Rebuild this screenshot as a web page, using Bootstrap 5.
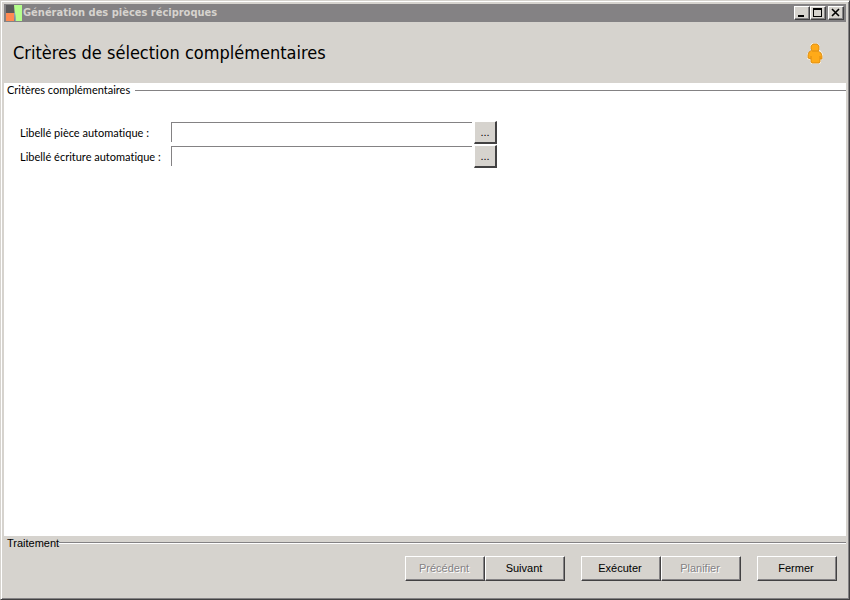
<!DOCTYPE html>
<html lang="fr">
<head>
<meta charset="utf-8">
<meta name="viewport" content="width=device-width, initial-scale=1">
<title>Génération des pièces réciproques</title>
<link href="https://cdn.jsdelivr.net/npm/bootstrap@5.3.0/dist/css/bootstrap.min.css" rel="stylesheet">
<style>
  :root { --face: #d6d3ce; --shade: #848284; --dark: #424142; }
  body { font-family: "Liberation Sans", Arial, sans-serif; font-size: 11px; line-height: 14px; color: #000; background: var(--face); }
  .window {
    padding: 2px; border: 1px solid; border-color: var(--face) var(--dark) var(--dark) var(--face);
    box-shadow: inset 1px 1px #fff, inset -1px -1px var(--shade);
  }
  .window-inner { margin: 1px; }
  .titlebar { height: 18px; background: var(--shade); color: var(--face); padding: 0 2px 0 1px; }
  .titlebar h1 { font: bold 11px/18px "DejaVu Sans Condensed", "DejaVu Sans", sans-serif; }
  .face-btn {
    font-size: 11px; line-height: 14px; color: #000; background: var(--face); padding: 0;
    border: 1px solid; border-color: #fff var(--dark) var(--dark) #fff; border-radius: 0;
    box-shadow: inset -1px -1px var(--shade);
  }
  .caption-btn { width: 16px; height: 14px; }
  .caption-btn svg { display: block; margin: auto; }
  .caption-close { margin-left: 2px; }
  .heading { height: 61px; padding: 1px 22px 0 9px; }
  .heading h2 { font: 18px/24px "DejaVu Sans Condensed", "DejaVu Sans", sans-serif; }
  .criteria { background: #fff; font-family: Lato, "Liberation Sans", sans-serif; font-variant-ligatures: none; }
  .group-title { padding-left: 3px; gap: 5px; }
  .rule { height: 1px; background: var(--shade); }
  .criteria-fields { padding-top: 25px; }
  .criteria-row { height: 24px; }
  .criteria-row label { width: 151px; line-height: 22px; }
  .criteria-input { width: 301px; height: 20px; border: solid var(--shade); border-width: 1px 0 0 1px; padding: 0 3px; outline: 0; }
  .browse-btn { font-family: "Liberation Sans", Arial, sans-serif; width: 23px; height: 23px; margin: -1px 0 0 2px; border-width: 1px 2px 2px 1px; box-shadow: none; }
  .treatment-title { padding-left: 3px; }
  .footer-rule { height: 2px; background: var(--shade); border-bottom: 1px solid #fff; }
  .actions { padding: 6px 9px 15px; }
  .action { width: 80px; height: 25px; padding: 0 2px 1px 0; }
  .action:disabled { color: var(--shade); text-shadow: 1px 1px #fff; }
</style>
</head>
<body>
<div class="window vh-100 d-flex flex-column">
  <div class="window-inner flex-grow-1 d-flex flex-column">
    <header class="titlebar d-flex align-items-center">
      <svg width="18" height="18" viewBox="0 0 18 18" aria-hidden="true">
        <path fill="#5a595a" d="M1 1h8v8H1z"/><path fill="#ff8a52" d="M1 9h8v8H1z"/><path fill="#b5ff8c" d="M9 1h8v16h-6z"/><path stroke="#8ca6bd" d="M9.500 9l1 8"/>
      </svg>
      <h1 class="m-0 flex-grow-1">Génération des pièces réciproques</h1>
      <button type="button" class="face-btn caption-btn" aria-label="Réduire"><svg width="14" height="12"><path fill="#000" d="M3 8h6v2H3z"/></svg></button>
      <button type="button" class="face-btn caption-btn" aria-label="Agrandir"><svg width="14" height="12"><path fill="#000" fill-rule="evenodd" d="M2 1h9v9H2zM3 3v6h7V3z"/></svg></button>
      <button type="button" class="face-btn caption-btn caption-close" aria-label="Fermer la fenêtre"><svg width="14" height="12"><path stroke="#000" stroke-width="1.600" d="M3 2l7 7M10 2l-7 7"/></svg></button>
    </header>
    <div class="heading d-flex align-items-center justify-content-between">
      <h2 class="m-0">Critères de sélection complémentaires</h2>
      <svg width="18" height="22" viewBox="0 0 18 22" aria-hidden="true">
        <path fill="#f7efde" d="M6 1h5l3 3v4l3 4v5l-2 1v3l-2 1H5l-1-4-3-1v-5l4-4-1-2V4z"/>
        <path fill="#ffaa18" stroke="#d68610" stroke-width=".8" d="M7 2h4l2 2v4l-1 1 3 2 1 3v3h-2v3l-1 1H6l-1-1v-3l-3-1v-3l1-3 3-2-1-1V4z"/>
        <path fill="none" stroke="#d68610" stroke-width=".8" d="M6 9h6M5 14v3M14 14v3"/>
      </svg>
    </div>
    <main class="criteria flex-grow-1">
      <div class="d-flex align-items-center group-title">
        <span>Critères complémentaires</span><span class="rule flex-grow-1"></span>
      </div>
      <div class="criteria-fields ps-3">
        <div class="criteria-row d-flex"><label for="piece">Libellé pièce automatique :</label><input id="piece" class="criteria-input" type="text"><button type="button" class="face-btn browse-btn">...</button></div>
        <div class="criteria-row d-flex"><label for="ecriture">Libellé écriture automatique :</label><input id="ecriture" class="criteria-input" type="text"><button type="button" class="face-btn browse-btn">...</button></div>
      </div>
    </main>
    <footer>
      <div class="d-flex align-items-center treatment-title"><span>Traitement</span><span class="footer-rule flex-grow-1"></span></div>
      <div class="actions d-flex justify-content-end">
        <button type="button" class="face-btn action" disabled>Précédent</button><button type="button" class="face-btn action">Suivant</button>
        <button type="button" class="face-btn action ms-3">Exécuter</button><button type="button" class="face-btn action" disabled>Planifier</button>
        <button type="button" class="face-btn action ms-3">Fermer</button>
      </div>
    </footer>
  </div>
</div>
<script src="https://cdn.jsdelivr.net/npm/bootstrap@5.3.0/dist/js/bootstrap.bundle.min.js"></script>
</body>
</html>
